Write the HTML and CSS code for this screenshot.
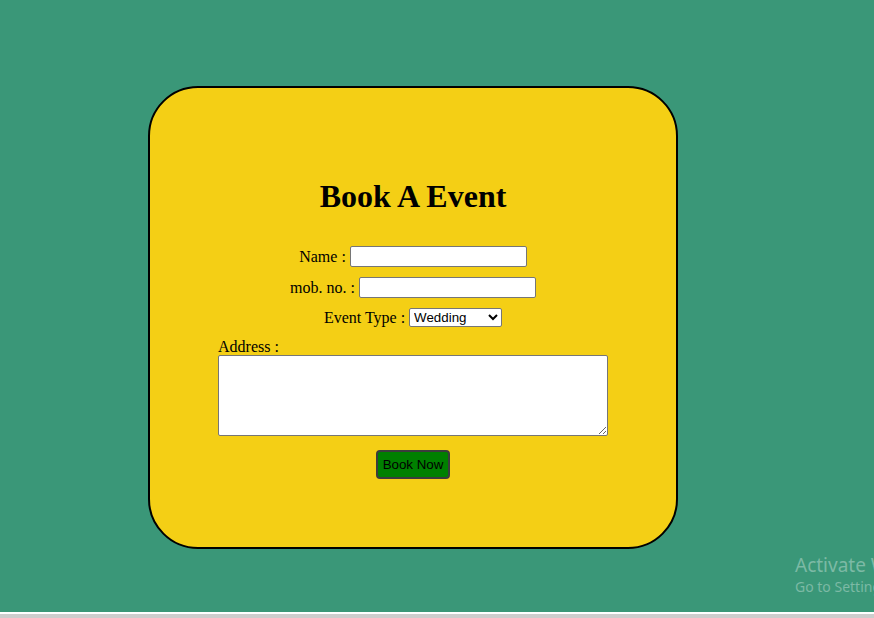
FILE: index.html
```html
<!DOCTYPE html>
<html lang="en">
<head>
<meta charset="utf-8">
<title>Book A Event</title>
<link rel="stylesheet" href="styles.css">
</head>
<body>
<div class="screen">
  <main class="page">
    <section class="card">
      <h1 class="title">Book A Event</h1>
      <form class="form">
        <div class="row">
          <label class="lbl" for="name">Name :</label>
          <input class="txt" id="name" type="text">
        </div>
        <div class="row">
          <label class="lbl" for="mob">mob. no. :</label>
          <input class="txt" id="mob" type="text">
        </div>
        <div class="row">
          <label class="lbl" for="type">Event Type :</label>
          <select class="sel" id="type">
            <option>Wedding</option>
            <option>Birthday</option>
            <option>Party</option>
          </select>
        </div>
        <div class="addr">
          <label class="lbl" for="addr">Address :</label>
          <textarea class="area" id="addr"></textarea>
        </div>
        <button class="btn" type="button">Book Now</button>
      </form>
    </section>
  </main>
  <div class="hbar"></div>
  <div class="watermark">
    <div class="wm1">Activate Windows</div>
    <div class="wm2">Go to Settings to activate Windows.</div>
  </div>
</div>
</body>
</html>
```

FILE: styles.css
```css
html, body {
  margin: 0;
  padding: 0;
  overflow: hidden;
}
.screen {
  position: relative;
  width: 874px;
  height: 618px;
  display: flex;
  flex-direction: column;
  background: #3a9778;
  overflow: hidden;
}
.page {
  flex: 1;
  padding: 86px 0 0 148px;
}
.card {
  width: 526px;
  border: 2px solid #000;
  border-radius: 50px;
  background: #f4cf15;
  padding-top: 90px;
  box-sizing: content-box;
  height: 369px;
  font-family: "Liberation Serif", "Times New Roman", serif;
  font-size: 16px;
  color: #000;
}
.title {
  margin: 0;
  text-align: center;
  font-size: 32px;
  font-weight: bold;
  line-height: 37px;
}
.form {
  margin-top: 31px;
  display: flex;
  flex-direction: column;
  align-items: center;
}
.row {
  display: flex;
  align-items: center;
  gap: 4px;
  margin-bottom: 10px;
}
.row:nth-child(3) {
  margin-bottom: 11px;
}
.lbl {
  line-height: 18px;
}
.txt {
  box-sizing: border-box;
  width: 177px;
  height: 21px;
  margin: 0;
  border: 1px solid #767676;
  border-radius: 2px;
  background: #fff;
}
.sel {
  box-sizing: border-box;
  width: 93px;
  height: 19px;
  margin: 0;
  font-family: "Liberation Sans", Arial, sans-serif;
  font-size: 13.33px;
  border: 1px solid #767676;
  border-radius: 2px;
  background: #fff;
  color: #000;
}
.addr {
  width: 390px;
  display: flex;
  flex-direction: column;
  align-items: flex-start;
}
.area {
  box-sizing: border-box;
  width: 390px;
  height: 81px;
  margin: -1px 0 0 0;
  border: 1px solid #767676;
  border-radius: 2px;
  background: #fff;
}
.btn {
  margin-top: 14px;
  box-sizing: border-box;
  width: 74px;
  height: 29px;
  padding: 0;
  background: #008000;
  border: 2px solid #3c3c3c;
  border-radius: 4px;
  font-family: "Liberation Sans", Arial, sans-serif;
  font-size: 13.33px;
  color: #000;
}
.hbar {
  height: 4px;
  border-top: 2px solid #fff;
  background: #cdcdcd;
}
.watermark {
  position: absolute;
  left: 795px;
  top: 553px;
  white-space: nowrap;
  font-family: "Noto Sans", "Open Sans", sans-serif;
  color: rgba(255, 255, 255, 0.34);
}
.wm1 {
  font-size: 19px;
  line-height: 24px;
}
.wm2 {
  font-size: 14px;
  line-height: 20px;
}
```
